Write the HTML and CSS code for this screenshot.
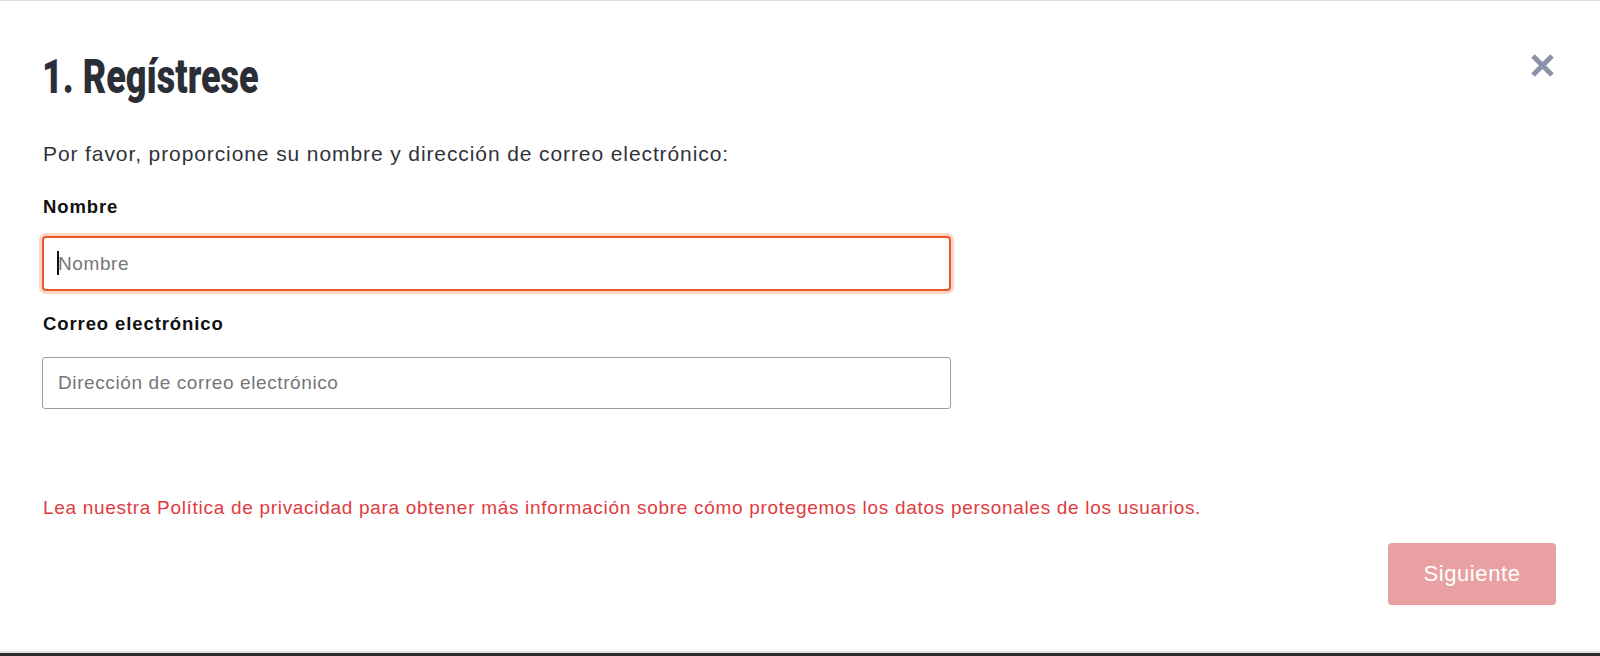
FILE: index.html
```html
<!DOCTYPE html>
<html lang="es">
<head>
<meta charset="utf-8">
<title>Regístrese</title>
<link rel="stylesheet" href="styles.css">
</head>
<body>
<div class="page">
  <div class="dialog">
    <div class="header">
      <h1 class="title"><span class="title-text">1. Regístrese</span></h1>
      <button class="close" type="button" aria-label="Cerrar">
        <svg width="25" height="25" viewBox="0 0 25 25"><path d="M3 3 L22 22 M22 3 L3 22" stroke="#8a93a8" stroke-width="5" fill="none"/></svg>
      </button>
    </div>
    <p class="intro">Por favor, proporcione su nombre y dirección de correo electrónico:</p>
    <label class="label label-first" for="nombre">Nombre</label>
    <div class="field field-first">
      <input id="nombre" class="input input-focus" type="text" placeholder="Nombre">
      <span class="caret"></span>
    </div>
    <label class="label" for="correo">Correo electrónico</label>
    <div class="field">
      <input id="correo" class="input" type="email" placeholder="Dirección de correo electrónico">
    </div>
    <p class="privacy">Lea nuestra Política de privacidad para obtener más información sobre cómo protegemos los datos personales de los usuarios.</p>
    <div class="actions">
      <button class="next" type="button">Siguiente</button>
    </div>
  </div>
  <div class="edge"></div>
  <div class="bottom-bar"></div>
</div>
</body>
</html>
```

FILE: styles.css
```css
html, body {
  margin: 0;
  padding: 0;
  background: #ffffff;
}

.page {
  height: 656px;
  display: flex;
  flex-direction: column;
  border-top: 1px solid #dcdcdc;
  box-sizing: border-box;
  font-family: "Liberation Sans", Arial, sans-serif;
}

.dialog {
  flex: 1;
  display: flex;
  flex-direction: column;
  padding: 52px 44px 0 42px;
}

.header {
  display: flex;
  justify-content: space-between;
  align-items: flex-start;
}

.title {
  margin: 0;
  font-family: Roboto, "Liberation Sans", sans-serif;
  font-weight: 900;
  font-size: 48px;
  line-height: 48px;
  color: #2b2e36;
  height: 48px;
}

.title-text {
  display: inline-block;
  transform: scaleX(0.75);
  transform-origin: left center;
  white-space: nowrap;
}

.close {
  border: 0;
  background: none;
  padding: 0;
  margin: 0 1px 0 0;
  width: 25px;
  height: 25px;
  cursor: pointer;
}

.close svg {
  display: block;
}

.intro {
  margin: 41px 0 0 1px;
  font-size: 21px;
  line-height: 24px;
  letter-spacing: 0.9px;
  color: #30333b;
}

.label {
  display: block;
  margin: 22px 0 0 1px;
  font-size: 18.5px;
  line-height: 22px;
  letter-spacing: 0.9px;
  font-weight: 700;
  color: #111111;
}

.label-first {
  margin-top: 30px;
}

.field {
  position: relative;
  margin-top: 22px;
  width: 909px;
}

.field-first {
  margin-top: 18px;
}

.input {
  display: block;
  box-sizing: border-box;
  width: 100%;
  height: 52px;
  margin: 0;
  padding: 0 15px;
  border: 1px solid #9b9ba9;
  border-radius: 3px;
  font-family: "Liberation Sans", Arial, sans-serif;
  font-size: 19px;
  letter-spacing: 0.6px;
  color: #222;
  background: #fff;
  outline: none;
}

.input::placeholder {
  color: #767676;
}

.input-focus {
  height: 55px;
  border: 2px solid #ea5727;
  padding: 0 14px;
  box-shadow: 0 0 0 3px #fdd6c8;
  border-radius: 4px;
}

.caret {
  position: absolute;
  left: 15px;
  top: 15px;
  width: 2px;
  height: 24px;
  background: #111;
}

.privacy {
  margin: 88px 0 0 1px;
  font-size: 19px;
  line-height: 22px;
  letter-spacing: 0.7px;
  color: #df3b3f;
}

.actions {
  display: flex;
  justify-content: flex-end;
  margin-top: 24px;
}

.next {
  width: 168px;
  height: 62px;
  border: 0;
  border-radius: 4px;
  background: #e9a0a2;
  color: #ffffff;
  font-family: "Liberation Sans", Arial, sans-serif;
  font-size: 22px;
  letter-spacing: 0.6px;
  cursor: pointer;
}

.edge {
  height: 2px;
  background: #e4e4e4;
}

.bottom-bar {
  height: 3px;
  background: #2c2c2e;
}
```
